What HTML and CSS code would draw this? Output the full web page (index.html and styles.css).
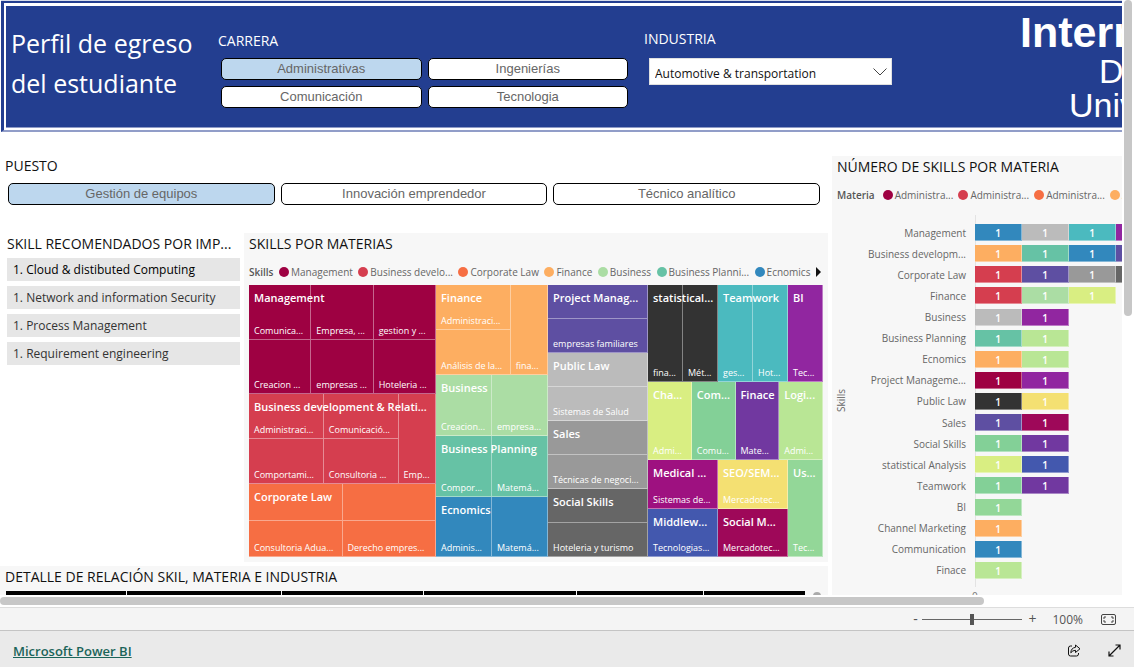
FILE: index.html
```html
<!DOCTYPE html>
<html lang="es">
<head>
<meta charset="utf-8">
<title>Perfil de egreso del estudiante</title>
<link rel="stylesheet" href="styles.css">
</head>
<body>
<div class="stage">
<main class="report">
  <header class="banner">
    <div class="banner-inner">
      <h1 class="title">Perfil de egreso<br>del estudiante</h1>
      <section class="career">
        <h2 class="slicer-label">CARRERA</h2>
        <div class="career-grid">
          <button class="chip selected" type="button">Administrativas</button>
          <button class="chip" type="button">Ingenierías</button>
          <button class="chip" type="button">Comunicación</button>
          <button class="chip" type="button">Tecnologia</button>
        </div>
      </section>
      <section class="industry">
        <label class="slicer-label" for="industry">INDUSTRIA</label>
        <div class="select-wrap">
          <select id="industry"><option>Automotive &amp; transportation</option></select>
          <svg class="chevron" viewBox="0 0 14 8" width="14" height="8"><path d="M.5 .5 7 7 13.500 .5" fill="none" stroke="#444" stroke-width="1"/></svg>
        </div>
      </section>
      <div class="brand">
        <strong class="brand-top">Intern</strong>
        <span class="brand-mid">D</span>
        <span class="brand-low">Univ</span>
      </div>
    </div>
  </header>

  <div class="board">
    <div class="left">
      <section class="roles">
        <h2 class="heading">PUESTO</h2>
        <div class="role-row">
          <button class="chip selected" type="button">Gestión de equipos</button>
          <button class="chip" type="button">Innovación emprendedor</button>
          <button class="chip" type="button">Técnico analítico</button>
        </div>
      </section>

      <div class="middle">
        <section class="recommended">
          <h2 class="heading">SKILL RECOMENDADOS POR IMP...</h2>
          <ul class="skill-list">
            <li class="first">1. Cloud &amp; distibuted Computing</li>
            <li>1. Network and information Security</li>
            <li>1. Process Management</li>
            <li>1. Requirement engineering</li>
          </ul>
        </section>

        <section class="panel tree-panel">
          <h2 class="heading">SKILLS POR MATERIAS</h2>
          <div class="legend tree-legend">
            <span class="legend-title">Skills</span>
            <span class="key"><i class="dot wine"></i>Management</span>
            <span class="key"><i class="dot red"></i>Business develo...</span>
            <span class="key"><i class="dot orange"></i>Corporate Law</span>
            <span class="key"><i class="dot peach"></i>Finance</span>
            <span class="key"><i class="dot green"></i>Business</span>
            <span class="key"><i class="dot teal"></i>Business Planni...</span>
            <span class="key"><i class="dot blue"></i>Ecnomics</span>
            <button class="next" type="button" aria-label="Siguiente"></button>
          </div>
          <div class="treemap">
            <div class="col col-a">
              <div class="group wine g-3x2"><b>Management</b><span>Comunica...</span><span>Empresa, ...</span><span>gestion y ...</span><span>Creacion ...</span><span>empresas ...</span><span>Hoteleria ...</span></div>
              <div class="group red g-side"><b>Business development &amp; Relati...</b><span>Administraci...</span><span>Comunicació...</span><span class="tall">Emp...</span><span>Comportami...</span><span>Consultoria ...</span></div>
              <div class="group orange g-2x2"><b>Corporate Law</b><span></span><span></span><span>Consultoria Adua...</span><span>Derecho empres...</span></div>
            </div>
            <div class="col col-b">
              <div class="group peach g-fin"><b>Finance</b><span>Administraci...</span><span class="tall">fina...</span><span>Análisis de la...</span></div>
              <div class="group green g-2"><b>Business</b><span>Creacion...</span><span>empresa...</span></div>
              <div class="group teal g-2"><b>Business Planning</b><span>Compor...</span><span>Matemá...</span></div>
              <div class="group blue g-2"><b>Ecnomics</b><span>Adminis...</span><span>Matemá...</span></div>
            </div>
            <div class="col col-c">
              <div class="group purple g-stack"><b>Project Manag...</b><span></span><span>empresas familiares</span></div>
              <div class="group silver g-stack"><b>Public Law</b><span></span><span>Sistemas de Salud</span></div>
              <div class="group gray g-stack"><b>Sales</b><span></span><span>Técnicas de negoci...</span></div>
              <div class="group iron g-stack"><b>Social Skills</b><span></span><span>Hoteleria y turismo</span></div>
            </div>
            <div class="col col-d">
              <div class="band band-top">
                <div class="group coal g-2"><b>statistical...</b><span>fina...</span><span>Mét...</span></div>
                <div class="group cyan g-2"><b>Teamwork</b><span>ges...</span><span>Hot...</span></div>
                <div class="group violet"><b>BI</b><span>Tec...</span></div>
              </div>
              <div class="band band-mid">
                <div class="group lime"><b>Cha...</b><span>Admi...</span></div>
                <div class="group jade"><b>Com...</b><span>Comu...</span></div>
                <div class="group grape"><b>Finace</b><span>Mate...</span></div>
                <div class="group pear"><b>Logi...</b><span>Admi...</span></div>
              </div>
              <div class="band band-low">
                <div class="group magenta"><b>Medical ...</b><span>Sistemas de...</span></div>
                <div class="group yellow"><b>SEO/SEM...</b><span>Mercadotec...</span></div>
                <div class="group mint tall"><b>Us...</b><span>Tec...</span></div>
                <div class="group indigo"><b>Middlew...</b><span>Tecnologias...</span></div>
                <div class="group crimson"><b>Social M...</b><span>Mercadotec...</span></div>
              </div>
            </div>
          </div>
        </section>
      </div>

      <section class="panel detail">
        <h2 class="heading">DETALLE DE RELACIÓN SKIL, MATERIA E INDUSTRIA</h2>
        <div class="detail-body">
          <div class="detail-head"><i></i><i></i><i></i><i></i><i></i><i></i></div>
          <i class="detail-thumb"></i>
        </div>
      </section>
    </div>

    <section class="panel chart-panel">
      <h2 class="heading">NÚMERO DE SKILLS POR MATERIA</h2>
      <div class="legend chart-legend">
        <span class="legend-title">Materia</span>
        <span class="key"><i class="dot wine"></i>Administra...</span>
        <span class="key"><i class="dot red"></i>Administra...</span>
        <span class="key"><i class="dot orange"></i>Administra...</span>
        <span class="key"><i class="dot peach"></i>A</span>
      </div>
      <div class="chart">
        <span class="axis-title">Skills</span>
        <div class="names">
          <span>Management</span><span>Business developm...</span><span>Corporate Law</span><span>Finance</span><span>Business</span><span>Business Planning</span><span>Ecnomics</span><span>Project Manageme...</span><span>Public Law</span><span>Sales</span><span>Social Skills</span><span>statistical Analysis</span><span>Teamwork</span><span>BI</span><span>Channel Marketing</span><span>Communication</span><span>Finace</span>
        </div>
        <div class="bars">
          <div><i class="blue">1</i><i class="silver">1</i><i class="cyan">1</i><i class="violet"></i></div>
          <div><i class="peach">1</i><i class="teal">1</i><i class="blue">1</i><i class="purple"></i></div>
          <div><i class="red">1</i><i class="purple">1</i><i class="gray">1</i><i class="iron"></i></div>
          <div><i class="red">1</i><i class="green">1</i><i class="lime">1</i></div>
          <div><i class="silver">1</i><i class="violet">1</i></div>
          <div><i class="teal">1</i><i class="pear">1</i></div>
          <div><i class="peach">1</i><i class="pear">1</i></div>
          <div><i class="wine">1</i><i class="violet">1</i></div>
          <div><i class="coal">1</i><i class="yellow">1</i></div>
          <div><i class="purple">1</i><i class="crimson">1</i></div>
          <div><i class="jade">1</i><i class="grape">1</i></div>
          <div><i class="lime">1</i><i class="indigo">1</i></div>
          <div><i class="jade">1</i><i class="grape">1</i></div>
          <div><i class="mint">1</i></div>
          <div><i class="peach">1</i></div>
          <div><i class="blue">1</i></div>
          <div><i class="pear">1</i></div>
        </div>
      </div>
      <span class="tick">0</span>
    </section>
  </div>
</main>
<div class="vscroll"><i></i></div>
</div>
<div class="hscroll"><i></i></div>

<div class="zoombar">
  <button type="button" class="zoom-btn" aria-label="Alejar">-</button>
  <input class="zoom-range" type="range" min="0" max="100" value="50" aria-label="Zoom">
  <button type="button" class="zoom-btn" aria-label="Acercar">+</button>
  <span class="zoom-value">100%</span>
  <button type="button" class="icon-btn" aria-label="Ajustar a la página">
    <svg viewBox="0 0 15 11" width="15" height="11" fill="none" stroke="#444"><rect x=".5" y=".5" width="14" height="10" rx="1.500"/><path d="M3 5V3h2M10 3h2v2M12 6v2h-2M5 8H3V6"/></svg>
  </button>
</div>
<footer class="footer">
  <a class="powerbi" href="#">Microsoft Power BI</a>
  <button type="button" class="icon-btn share" aria-label="Compartir">
    <svg viewBox="0 0 14 13" width="14" height="13" fill="none" stroke="#111" stroke-linejoin="round"><path d="M5 2H3.500Q1.500 2 1.500 4v6q0 2 2 2h6q2 0 2-2V9"/><path d="M8.500 1 13 4.800 8.500 8.500V6.300Q5.500 6.300 3.800 8.800 4 4 8.500 3.300Z"/></svg>
  </button>
  <button type="button" class="icon-btn" aria-label="Pantalla completa">
    <svg viewBox="0 0 13 13" width="13" height="13" fill="none" stroke="#111" stroke-width="1.200"><path d="M1 12 12 1M7.500 1H12v4.500M1 7.500V12h4.500"/></svg>
  </button>
</footer>
</body>
</html>
```
FILE: styles.css
```css
* { box-sizing: border-box; }

body {
  margin: 0;
  height: 100vh;
  display: flex;
  flex-direction: column;
  overflow: hidden;
  background: #fff;
  color: #111;
  font-family: "Open Sans", "Noto Sans", sans-serif;
  font-size: 12px;
}

h1, h2, ul { margin: 0; padding: 0; font-weight: 400; }
button { font: inherit; color: inherit; background: none; border: 0; padding: 0; }
i { font-style: normal; }

.stage { flex: 1; min-height: 0; display: flex; }
.report { flex: 1; min-width: 0; overflow: hidden; }

/* Banner */
.banner {
  margin-left: 1px;
  border-top: 1px solid #d5dbe9;
}
.banner-inner {
  height: 131px;
  border: 3px solid #233e90;
  border-width: 2px 0 2px 3px;
  border-bottom-color: #919dc8;
  box-shadow: inset 2px 3px #fff, inset 0 -2px #fff, inset 0 -3px #8f9bc6;
  background: #233e90;
  color: #fff;
  display: flex;
  overflow: hidden;
}
.title {
  width: 214px;
  padding: 20px 0 0 7px;
  font-size: 25px;
  line-height: 40px;
  white-space: nowrap;
}
.slicer-label {
  display: block;
  font-size: 14px;
  line-height: 22px;
}
.career { width: 426px; padding-top: 27px; }
.career-grid {
  display: grid;
  grid-template-columns: 1fr 1fr;
  gap: 6px;
  margin: 6px 16px 0 3px;
}
.chip {
  height: 22px;
  border: 1px solid #000;
  border-radius: 5px;
  background: #fff;
  color: #666;
  font-family: "Liberation Sans", Arial, sans-serif;
  font-size: 13px;
  line-height: 20px;
}
.chip.selected { background: #bdd7ee; }
.industry { width: 376px; padding-top: 25px; }
.select-wrap {
  position: relative;
  width: 243px;
  margin: 8px 0 0 5px;
}
.select-wrap select {
  width: 100%;
  height: 27px;
  padding: 3px 5px 0;
  appearance: none;
  border: 1px solid #e0e0e0;
  border-radius: 0;
  background: #fff;
  color: #111;
  font-family: inherit;
  font-size: 12px;
}
.chevron { position: absolute; right: 5px; top: 10px; pointer-events: none; }
.brand {
  flex: 1;
  min-width: 0;
  overflow: hidden;
  padding-top: 8px;
  font-family: "Liberation Sans", Arial, sans-serif;
  font-size: 34px;
  line-height: 34px;
  white-space: nowrap;
}
.brand > * { display: block; }
.brand-top { font-size: 43px; line-height: 43px; }
.brand-mid { margin-left: 79px; }
.brand-low { margin-left: 49px; }

/* Board */
.board {
  display: grid;
  grid-template-columns: 828fr 290fr;
  gap: 4px;
  padding-top: 24px;
}
.left { min-width: 0; }
.heading {
  font-size: 14px;
  line-height: 22px;
  font-weight: 400;
  white-space: nowrap;
}
.panel { background: #f7f7f7; }
.roles { padding: 0 8px; }
.roles .heading { margin-left: -3px; line-height: 20px; }
.role-row {
  display: grid;
  grid-template-columns: 1fr 1fr 1fr;
  gap: 6px;
  margin-top: 7px;
}
.middle {
  display: grid;
  grid-template-columns: 233px 1fr;
  gap: 4px;
  margin-top: 28px;
  padding-left: 7px;
}
.recommended { min-width: 0; }
.skill-list {
  list-style: none;
  display: grid;
  gap: 5px;
  margin-top: 3px;
}
.skill-list li {
  padding-left: 6px;
  background: #e6e6e6;
  color: #333;
  font-size: 12px;
  line-height: 23px;
  white-space: nowrap;
}
.skill-list .first { color: #000; }

.legend {
  display: flex;
  align-items: center;
  color: #666;
  font-size: 10px;
  line-height: 16px;
  white-space: nowrap;
}
.legend-title { color: #555; font-weight: 600; }
.key { display: flex; align-items: center; gap: 2px; }
.dot { width: 10px; height: 10px; border-radius: 50%; }

.tree-panel { min-width: 0; padding: 0 5px 5px; }
.tree-legend { justify-content: space-between; margin: 9px 2px 5px 0; }
.next {
  border-left: 5px solid #111;
  border-top: 5px solid transparent;
  border-bottom: 5px solid transparent;
}

/* Treemap */
.treemap {
  display: grid;
  grid-template-columns: 187fr 112fr 100fr 175fr;
  height: 272px;
  color: #fff;
}
.col { display: grid; min-width: 0; }
.col-a { grid-template-rows: 109fr 90fr 73fr; }
.col-b { grid-template-rows: 90fr 61fr 61fr 60fr; }
.col-c { grid-template-rows: repeat(4, 1fr); }
.col-d { grid-template-rows: 97fr 78fr 97fr; }
.band { display: grid; min-height: 0; }
.band-top { grid-template-columns: 2fr 2fr 1fr; }
.band-mid { grid-template-columns: repeat(4, 1fr); }
.band-low { grid-template-columns: 2fr 2fr 1fr; grid-template-rows: 1fr 1fr; }
.group {
  position: relative;
  display: grid;
  min-width: 0;
  min-height: 0;
  overflow: hidden;
}
.group b {
  position: absolute;
  left: 5px;
  top: 4px;
  font-size: 11px;
  line-height: 18px;
  font-weight: 600;
  white-space: nowrap;
}
.group span {
  display: flex;
  align-items: flex-end;
  min-width: 0;
  min-height: 0;
  overflow: hidden;
  padding: 0 0 1px 5px;
  border-right: 1px solid rgba(255, 255, 255, .4);
  border-bottom: 1px solid rgba(255, 255, 255, .4);
  font-size: 9px;
  line-height: 14px;
  font-weight: 500;
  white-space: nowrap;
}
.tall { grid-row: span 2; }
.g-3x2 { grid-template: 1fr 1fr / 1fr 1fr 1fr; }
.g-side { grid-template: 1fr 1fr / 2fr 2fr 1fr; }
.g-2x2 { grid-template: 1fr 1fr / 1fr 1fr; }
.g-fin { grid-template: 1fr 1fr / 2fr 1fr; }
.g-2 { grid-template-columns: 1fr 1fr; }
.g-stack { grid-template-rows: 1fr 1fr; }

/* Series colours */
.wine { background: #9e0142; }
.red { background: #d53e4f; }
.orange { background: #f66e43; }
.peach { background: #fdae61; }
.green { background: #abdda4; }
.teal { background: #66c2a5; }
.blue { background: #3288bd; }
.purple { background: #5e4fa2; }
.silver { background: #bbb; }
.gray { background: #999; }
.iron { background: #666; }
.coal { background: #333; }
.cyan { background: #4bbabf; }
.violet { background: #9126a0; }
.lime { background: #d9ee82; }
.jade { background: #83d097; }
.grape { background: #7138a0; }
.pear { background: #b9e695; }
.magenta { background: #9e1180; }
.yellow { background: #f4e072; }
.mint { background: #93d798; }
.indigo { background: #4358ae; }
.crimson { background: #9e0859; }

/* Detail table */
.detail { margin-top: 4px; padding-left: 5px; }
.detail-body { display: flex; margin-top: 3px; padding: 0 7px 0 1px; align-items: flex-start; }
.detail-head {
  flex: 1;
  display: grid;
  grid-template-columns: 120fr 154fr 142fr 152fr 126fr 101fr;
  gap: 1px;
}
.detail-head i { height: 30px; background: #000; }
.detail-thumb {
  width: 8px;
  height: 30px;
  margin: 1px 0 0 8px;
  border-radius: 4px;
  background: #aaa;
}

/* Stacked bars */
.chart-panel { min-width: 0; padding-left: 5px; overflow: hidden; }
.chart-legend { gap: 5px; margin-top: 9px; }
.chart-legend .legend-title { margin-right: 3px; }
.chart {
  display: grid;
  grid-template-columns: 8px 121px 1fr;
  height: 372px;
  margin-top: 12px;
  color: #666;
  font-size: 10px;
}
.axis-title {
  writing-mode: vertical-rl;
  transform: rotate(180deg);
  justify-self: center;
  align-self: center;
  font-size: 10px;
}
.names, .bars {
  display: grid;
  grid-template-rows: repeat(17, 1fr);
  align-items: center;
  padding: 7px 0 6px;
}
.names { text-align: right; line-height: 16px; white-space: nowrap; }
.bars { margin-left: 9px; border-left: 1px solid #e3e3e3; }
.bars div { display: flex; margin-left: -1px; }
.bars i {
  flex: none;
  width: 47px;
  height: 17px;
  border: solid rgba(255, 255, 255, .4);
  border-width: 0 1px 1px 0;
  color: #fff;
  font-size: 10px;
  font-weight: 600;
  line-height: 18px;
  text-align: center;
}
.tick { display: block; margin: 2px 0 0 135px; color: #777; font-size: 10px; line-height: 14px; }

/* Scroll bars */
.vscroll { width: 12px; padding: 0 2px; background: #fff; }
.vscroll i { display: block; height: 316px; border-radius: 4px; background: #c7c7c7; }
.hscroll { flex: none; height: 12px; padding: 2px 0; z-index: 1; background: #fff; }
.hscroll i { display: block; width: 984px; height: 8px; border-radius: 4px; background: #c7c7c7; }

/* Bottom bars */
.zoombar {
  flex: none;
  display: flex;
  align-items: center;
  justify-content: flex-end;
  height: 23px;
  padding-right: 18px;
  border-top: 1px solid #ddd;
  background: #f4f4f4;
  color: #555;
}
.zoom-btn { width: 8px; font-size: 14px; line-height: 20px; }
.zoom-range {
  width: 100px;
  height: 12px;
  margin: 0 6px 0 3px;
  appearance: none;
  background: linear-gradient(#666, #666) center / 100% 1px no-repeat;
}
.zoom-range::-webkit-slider-thumb {
  appearance: none;
  width: 4px;
  height: 11px;
  background: #555;
}
.zoom-value { margin: 0 18px 0 16px; font-size: 12px; }
.icon-btn { display: flex; }
.footer {
  flex: none;
  display: flex;
  align-items: center;
  height: 37px;
  padding: 3px 13px 0;
  border-top: 1px solid #c4c4c4;
  background: #eaeaea;
}
.powerbi { color: #1b6459; font-size: 13px; font-weight: 600; }
.share { margin: 0 27px 0 auto; }
```
